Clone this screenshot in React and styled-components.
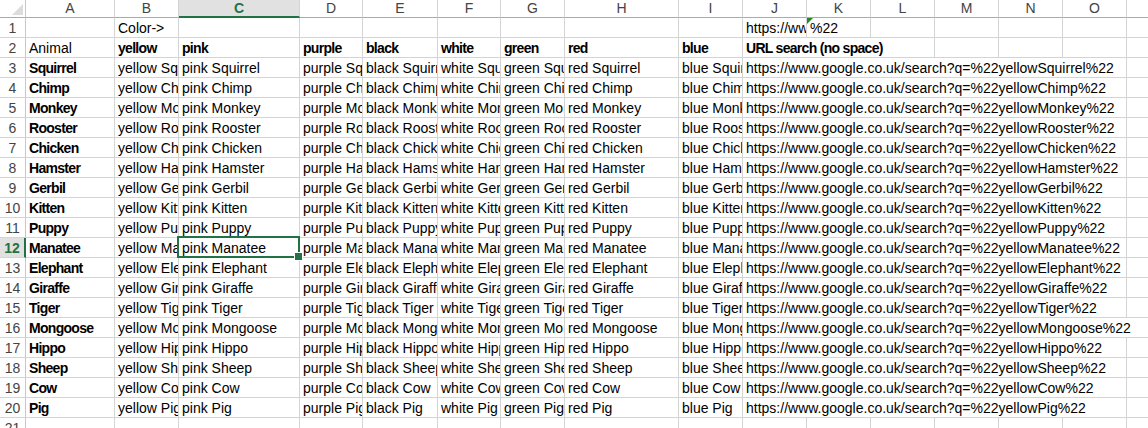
import React from "react";
import styled, { createGlobalStyle, css } from "styled-components";

const GlobalStyle = createGlobalStyle`
  body {
    margin: 0;
    background: #fff;
  }
`;

const COLS = ["A", "B", "C", "D", "E", "F", "G", "H", "I", "J", "K", "L", "M", "N", "O", "P"];
const WIDTHS = [89, 64, 121, 63, 75, 63, 64, 114, 64, 64, 64, 64, 64, 64, 64, 64];
const COLORS = ["yellow", "pink", "purple", "black", "white", "green", "red", "blue"];
const ANIMALS = [
  "Squirrel", "Chimp", "Monkey", "Rooster", "Chicken", "Hamster", "Gerbil", "Kitten", "Puppy",
  "Manatee", "Elephant", "Giraffe", "Tiger", "Mongoose", "Hippo", "Sheep", "Cow", "Pig"
];
const SEL_COL = "C";
const SEL_ROW = 12;
const GREEN = "#217346";

const Sheet = styled.div`
  display: grid;
  grid-template-columns: 26px ${WIDTHS.map(w => `${w}px`).join(" ")};
  grid-template-rows: 18px;
  grid-auto-rows: 20px;
  width: 1148px;
  height: 428px;
  overflow: hidden;
  font-family: "Liberation Sans", Arial, sans-serif;
  font-size: 14px;
  box-sizing: border-box;
  * {
    box-sizing: border-box;
  }
`;

const Corner = styled.div`
  position: relative;
  border-right: 1px solid #c8c8c8;
  border-bottom: 1px solid #ababab;
  &::after {
    content: "";
    position: absolute;
    right: 2px;
    bottom: 2px;
    border-left: 11px solid transparent;
    border-bottom: 11px solid #dcdcdc;
  }
`;

const ColHead = styled.div`
  border-right: 1px solid #d4d4d4;
  border-bottom: 1px solid #ababab;
  text-align: center;
  line-height: 17px;
  color: #444;
  ${p =>
    p.$selected &&
    css`
      background: #e1e1e1;
      color: ${GREEN};
      font-weight: bold;
      border-bottom: 2px solid ${GREEN};
      line-height: 16px;
    `}
`;

const RowHead = styled.div`
  border-right: 1px solid #c8c8c8;
  border-bottom: 1px solid #d4d4d4;
  text-align: center;
  padding-top: 1px;
  line-height: 19px;
  color: #444;
  ${p =>
    p.$selected &&
    css`
      background: #e1e1e1;
      color: ${GREEN};
      font-weight: bold;
      border-right: 2px solid ${GREEN};
    `}
`;

const Cell = styled.div`
  position: relative;
  grid-column: span ${p => p.$span || 1};
  border-right: 1px solid #d4d4d4;
  border-bottom: 1px solid #d4d4d4;
  padding-left: 3px;
  padding-top: 1px;
  white-space: nowrap;
  overflow: hidden;
  line-height: 19px;
  color: #000;
  ${p =>
    p.$bold &&
    css`
      font-weight: bold;
      letter-spacing: -0.7px;
    `}
  ${p =>
    p.$flag &&
    css`
      &::before {
        content: "";
        position: absolute;
        top: 0;
        left: 0;
        border-top: 6px solid #1f8c1f;
        border-right: 6px solid transparent;
      }
    `}
  ${p =>
    p.$selected &&
    css`
      overflow: visible;
      z-index: 2;
      &::before {
        content: "";
        position: absolute;
        top: -2px;
        left: -2px;
        right: -1px;
        bottom: -1px;
        border: 2px solid ${GREEN};
      }
      &::after {
        content: "";
        position: absolute;
        right: -4px;
        bottom: -4px;
        width: 7px;
        height: 7px;
        background: ${GREEN};
        border: 1px solid #fff;
      }
    `}
`;

const url = (color, animal) =>
  `https://www.google.co.uk/search?q=%22${color}${animal}%22`;

const buildRows = () => {
  const rows = [];
  rows.push({
    n: 1,
    cells: [
      { text: "" },
      { text: "Color->" },
      ...Array(7).fill({ text: "" }),
      { text: "https://w\u200bww.google.co.uk/search?q=" },
      { text: "%22", flag: true },
      ...Array(5).fill({ text: "" })
    ]
  });
  rows.push({
    n: 2,
    cells: [
      { text: "Animal" },
      ...COLORS.map(c => ({ text: c, bold: true })),
      { text: "URL search (no space)", bold: true, span: 3 },
      ...Array(4).fill({ text: "" })
    ]
  });
  ANIMALS.forEach((animal, i) => {
    const long = animal === "Mongoose";
    rows.push({
      n: i + 3,
      cells: [
        { text: animal, bold: true },
        ...COLORS.map(c => ({ text: `${c} ${animal}` })),
        { text: url("yellow", animal), span: long ? 7 : 6 },
        ...(long ? [] : [{ text: "" }])
      ]
    });
  });
  rows.push({ n: 21, cells: Array(16).fill({ text: "" }) });
  return rows;
};

const ROWS = buildRows();

export default function App() {
  return (
    <>
      <GlobalStyle />
      <Sheet>
        <Corner />
        {COLS.map(c => (
          <ColHead key={c} $selected={c === SEL_COL}>
            {c}
          </ColHead>
        ))}
        {ROWS.map(row => {
          let col = 0;
          return (
            <React.Fragment key={row.n}>
              <RowHead $selected={row.n === SEL_ROW}>{row.n}</RowHead>
              {row.cells.map((cell, i) => {
                const letter = COLS[col];
                col += cell.span || 1;
                return (
                  <Cell
                    key={i}
                    $span={cell.span}
                    $bold={cell.bold}
                    $flag={cell.flag}
                    $selected={row.n === SEL_ROW && letter === SEL_COL}
                  >
                    {cell.text}
                  </Cell>
                );
              })}
            </React.Fragment>
          );
        })}
      </Sheet>
    </>
  );
}
